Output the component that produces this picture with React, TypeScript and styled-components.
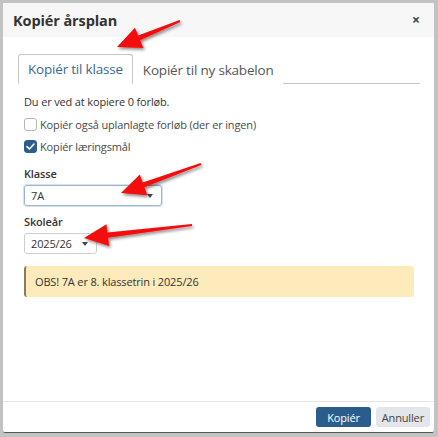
import React from 'react';
import styled, { createGlobalStyle } from 'styled-components';

const GlobalStyle = createGlobalStyle`
	html, body {
		margin: 0;
		padding: 0;
		background: #c3c3c3;
	}
	body {
		font-family: 'Open Sans', 'Noto Sans', Arial, sans-serif;
		color: #333;
	}
`;

type Pt = [number, number];

// red annotation arrows drawn over the screenshot
const arrowPoints = (tail: Pt, tip: Pt) => {
	const dx = tip[0] - tail[0];
	const dy = tip[1] - tail[1];
	const len = Math.hypot(dx, dy);
	const ux = dx / len;
	const uy = dy / len;
	const nx = -uy;
	const ny = ux;
	const headLen = 24;
	const headW = 11;
	const shaft = 2.6;
	const bx = tip[0] - ux * headLen;
	const by = tip[1] - uy * headLen;
	const pts: Pt[] = [
		[tail[0] + nx * 1, tail[1] + ny * 1],
		[bx + nx * shaft, by + ny * shaft],
		[bx + nx * headW, by + ny * headW],
		tip,
		[bx - nx * headW, by - ny * headW],
		[bx - nx * shaft, by - ny * shaft],
		[tail[0] - nx * 1, tail[1] - ny * 1],
	];
	return pts.map((p) => p.join(',')).join(' ');
};

const arrows: [Pt, Pt][] = [
	[[180, 21], [117, 47]],
	[[201, 164], [121, 193]],
	[[192, 225], [84, 238]],
];

const App = () => {
	return (
		<>
			<GlobalStyle />
			<Page>
				<Modal>
					<Header>
						<Title>Kopiér årsplan</Title>
						<Close>×</Close>
					</Header>
					<Body>
						<Tabs>
							<Tab $active>Kopiér til klasse</Tab>
							<Tab>Kopiér til ny skabelon</Tab>
						</Tabs>
						<Panel>
							<Info>Du er ved at kopiere 0 forløb.</Info>
							<CheckRow>
								<Box />
								<span>Kopiér også uplanlagte forløb (der er ingen)</span>
							</CheckRow>
							<CheckRow>
								<Box $checked>
									<svg width='11' height='11' viewBox='0 0 11 11'>
										<path
											d='M2 5.6 L4.4 8 L9 3'
											fill='none'
											stroke='#fff'
											strokeWidth='1.6'
											strokeLinecap='round'
											strokeLinejoin='round'
										/>
									</svg>
								</Box>
								<span>Kopiér læringsmål</span>
							</CheckRow>
							<Label $gap={12}>Klasse</Label>
							<Select $width={138} $focus>
								<span>7A</span>
								<Caret />
							</Select>
							<Label $gap={8}>Skoleår</Label>
							<Select $width={73}>
								<span>2025/26</span>
								<Caret />
							</Select>
							<Alert>OBS! 7A er 8. klassetrin i 2025/26</Alert>
						</Panel>
					</Body>
					<Footer>
						<Button $primary>Kopiér</Button>
						<Button>Annuller</Button>
					</Footer>
				</Modal>
				<Overlay width='438' height='437' viewBox='0 0 438 437'>
					<defs>
						<filter id='sh' x='-20%' y='-40%' width='140%' height='180%'>
							<feDropShadow dx='1.5' dy='2' stdDeviation='1.6' floodColor='#000' floodOpacity='0.45' />
						</filter>
					</defs>
					{arrows.map(([tail, tip], i) => (
						<polygon key={i} points={arrowPoints(tail, tip)} fill='#f40a0a' filter='url(#sh)' />
					))}
				</Overlay>
			</Page>
		</>
	);
};

export default App;

const Page = styled.div`
	position: relative;
	width: 438px;
	height: 437px;
	padding: 3px 4px 0 3px;
	box-sizing: border-box;
`;

const Modal = styled.div`
	width: 431px;
	height: 430px;
	background: #fff;
	display: flex;
	flex-direction: column;
	border-bottom: 1px solid #555;
	border-radius: 0 0 2px 2px;
	box-sizing: border-box;
`;

const Header = styled.div`
	height: 34px;
	background: #f7f7f7;
	display: flex;
	align-items: center;
	justify-content: space-between;
	padding: 0 14px 0 10px;
	flex-shrink: 0;
`;

const Title = styled.h1`
	margin: 0;
	font-size: 14.5px;
	font-weight: 700;
	color: #333;
	letter-spacing: -0.1px;
`;

const Close = styled.span`
	font-size: 14px;
	font-weight: 700;
	color: #444;
	line-height: 1;
`;

const Body = styled.div`
	flex: 1;
	padding: 17px 14px 0 15px;
`;

const Tabs = styled.div`
	display: flex;
	border-bottom: 1px solid #c6c6c6;
	height: 29px;
`;

const Tab = styled.div<{ $active?: boolean }>`
	padding: 0 9px;
	height: 30px;
	box-sizing: border-box;
	display: flex;
	align-items: center;
	font-size: 13.5px;
	letter-spacing: -0.2px;
	color: ${(p) => (p.$active ? '#3a6794' : '#555')};
	background: #fff;
	border: 1px solid ${(p) => (p.$active ? '#c6c6c6' : 'transparent')};
	border-bottom: ${(p) => (p.$active ? '1px solid #fff' : 'none')};
	border-radius: 3px 3px 0 0;
	margin-bottom: -1px;
`;

const Panel = styled.div`
	padding: 10px 6px 0 6px;
	font-size: 11px;
	letter-spacing: -0.15px;
`;

const Info = styled.div`
	height: 16px;
	line-height: 16px;
`;

const CheckRow = styled.div`
	display: flex;
	align-items: center;
	gap: 3px;
	margin-top: 6px;
	height: 16px;
	color: #4a4a4a;
`;

const Box = styled.span<{ $checked?: boolean }>`
	width: 13px;
	height: 13px;
	box-sizing: border-box;
	border-radius: 3px;
	border: 1px solid ${(p) => (p.$checked ? '#2c5d8f' : '#b5b5b5')};
	background: ${(p) => (p.$checked ? '#2c5d8f' : '#fff')};
	display: flex;
	align-items: center;
	justify-content: center;
`;

const Label = styled.div<{ $gap: number }>`
	font-weight: 600;
	color: #333;
	margin-top: ${(p) => p.$gap}px;
	height: 16px;
	line-height: 16px;
`;

const Select = styled.div<{ $width: number; $focus?: boolean }>`
	width: ${(p) => p.$width}px;
	height: 21px;
	box-sizing: border-box;
	margin-top: 3px;
	border: 1px solid ${(p) => (p.$focus ? '#9bb4cf' : '#cfcfcf')};
	box-shadow: ${(p) => (p.$focus ? '0 0 0 1px #d6e2ef' : 'none')};
	border-radius: 3px;
	display: flex;
	align-items: center;
	justify-content: space-between;
	padding: 0 8px 0 6px;
	font-size: 11px;
	color: #333;
`;

const Caret = styled.span`
	width: 0;
	height: 0;
	border-left: 3px solid transparent;
	border-right: 3px solid transparent;
	border-top: 4px solid #444;
`;

const Alert = styled.div`
	margin-top: 12px;
	height: 31px;
	box-sizing: border-box;
	background: #feebbb;
	border-left: 2px solid #8a7c58;
	border-radius: 3px;
	display: flex;
	align-items: center;
	padding-left: 9px;
	color: #333;
`;

const Footer = styled.div`
	border-top: 1px solid #e6e6e6;
	height: 31px;
	box-sizing: border-box;
	display: flex;
	justify-content: flex-end;
	align-items: center;
	gap: 5px;
	padding: 0 4px 0 0;
	flex-shrink: 0;
`;

const Button = styled.button<{ $primary?: boolean }>`
	font-family: inherit;
	font-size: 11px;
	letter-spacing: -0.15px;
	height: 20px;
	padding: 0 ${(p) => (p.$primary ? '11px' : '6px')};
	border: none;
	border-radius: 3px;
	background: ${(p) => (p.$primary ? '#2b5d8c' : '#e3e6ea')};
	color: ${(p) => (p.$primary ? '#fff' : '#444')};
`;

const Overlay = styled.svg`
	position: absolute;
	left: 0;
	top: 0;
	pointer-events: none;
`;
